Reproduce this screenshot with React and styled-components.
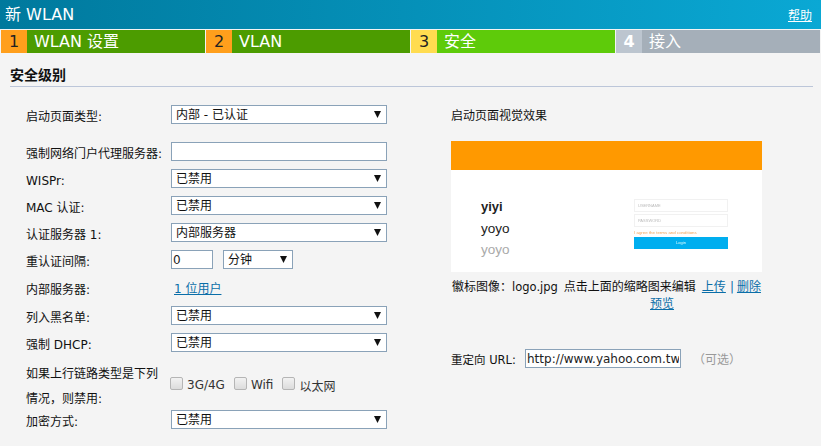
import React from "react";
import styled, { createGlobalStyle } from "styled-components";

const FONT = `"DejaVu Sans", "Noto Sans CJK SC", sans-serif`;

const Global = createGlobalStyle`
  html, body { margin: 0; padding: 0; background: #f4f4f4; overflow: hidden; }
  body { font-family: ${FONT}; font-size: 12px; color: #111; }
`;
const Page = styled.div`width: 821px; height: 446px; overflow: hidden; background: #f4f4f4;`;
const Header = styled.header`
  height: 29px; display: flex; align-items: center; justify-content: space-between;
  padding: 0 9px 0 5px; color: #fff;
  background: linear-gradient(90deg, #00799d 0%, #0aa8d4 100%);
`;
const HeaderTitle = styled.div`font-size: 16px; line-height: 29px;`;
const HelpLink = styled.a`font-size: 12px; color: #fff; text-decoration: underline;`;
const Steps = styled.div`
  display: grid; grid-template-columns: repeat(4, 204px); column-gap: 1px;
  padding: 1px 0 0 1px; height: 23px;
`;
const Step = styled.div`display: flex; height: 23px; background: ${p => p.$bg};`;
const StepNum = styled.div`
  width: 26px; background: ${p => p.$bg}; color: ${p => p.$color || "#222"};
  font-size: 16px; line-height: 23px; text-align: center;
  font-weight: ${p => p.$bold ? 700 : 400};
`;
const StepLabel = styled.div`
  color: #fff; font-size: 16px; line-height: 23px; padding-left: 7px;
`;
const SectionTitle = styled.h2`
  margin: 13px 8px 0 10px; height: 20px; font-size: 14px; line-height: 18px; font-weight: 700;
  color: #111; border-bottom: 1px solid #bcc6d9;
`;
const Columns = styled.div`display: flex; padding-top: 18px;`;
const LeftCol = styled.div`width: 387px; padding-left: 26px; box-sizing: border-box; flex: none;`;
const Row = styled.div`
  display: grid; grid-template-columns: 145px 216px; align-items: center;
  min-height: 19px; margin-top: ${p => p.$mt ?? 8}px;
`;
const Label = styled.div`font-size: 12px; line-height: 14px; color: #111; padding-top: 5px; white-space: nowrap;`;
const Select = styled.div`
  box-sizing: border-box; width: ${p => p.$w || 216}px; height: 19px;
  border: 1px solid #8aa2b8; background: #fff; display: flex; align-items: center;
  justify-content: space-between; padding: 0 4px; font-size: 12px; line-height: 15px; color: #111;
`;
const SelectText = styled.span`padding-top: 1px;`;
const Arrow = styled.svg`width: 7px; height: 7px; flex: none; margin-right: 1px;`;
const TextInput = styled.input`
  box-sizing: border-box; width: ${p => p.$w || 216}px; height: 19px; margin: 0; padding: 0 1px;
  border: 1px solid #8aa2b8; background: #fff; outline: none; border-radius: 0; flex: none;
  font-family: ${FONT}; font-size: 12px; color: #222;
`;
const Inline = styled.div`display: flex; align-items: center; gap: 10px;`;
const CheckRow = styled.div`display: flex; align-items: center; gap: 9px; margin-left: -1px;`;
const UserLink = styled.a`color: #0a6ea8; text-decoration: underline; font-size: 12px; padding-left: 3px;`;
const Check = styled.label`display: inline-flex; align-items: center; gap: 4px; font-size: 12px; color: #333;`;
const Box = styled.span`
  display: block; width: 11px; height: 11px; border: 1px solid #b5b5b5; border-radius: 2px;
  background: linear-gradient(#f2f2f2, #dcdcdc); margin-top: -4px;
`;
const RightCol = styled.div`margin-left: 64px; width: 330px; font-size: 12px;`;
const PreviewTitle = styled.div`line-height: 20px; margin-top: 1px;`;
const Preview = styled.div`
  width: 311px; height: 131px; margin-top: 15px; background: #fff; display: flex; flex-direction: column;
`;
const PreviewBar = styled.div`height: 29px; background: #ff9900; flex: none;`;
const PreviewBody = styled.div`flex: 1; display: flex; justify-content: space-between; padding: 29px 34px 0 30px;`;
const Names = styled.div`display: flex; flex-direction: column; margin-top: -3px; font-family: "Liberation Sans", sans-serif;`;
const Name = styled.div`
  color: ${p => p.$grey ? "#aaa" : "#222"}; font-weight: ${p => p.$bold ? 700 : 400};
  line-height: 21.5px; font-size: ${p => p.$size || 13.5}px;
`;
const Login = styled.div`width: 94px; display: flex; flex-direction: column; filter: blur(0.35px); font-family: "Liberation Sans", sans-serif;`;
const Fake = styled.div`
  box-sizing: border-box; height: 13px; border: 1px solid #f1f1f1; margin-bottom: 2px;
  font-size: 4px; line-height: 11px; color: #bbb; padding-left: 3px;
`;
const Agree = styled.div`font-size: 4.4px; line-height: 8px; color: #f3a35a; white-space: nowrap;`;
const LoginBtn = styled.div`height: 12px; background: #00aeef; color: #dff; font-size: 4px; line-height: 12px; text-align: center;`;
const LogoLine = styled.div`display: flex; align-items: baseline; white-space: nowrap; margin-top: 7px; line-height: 17px; padding-left: 1px;`;
const LogoName = styled.span`margin-right: 6px; font-size: 11.5px;`;
const Upload = styled.a`color: #0a6ea8; text-decoration: underline; margin-left: 6px;`;
const Pipe = styled.span`color: #0a6ea8; margin: 0 3px 0 4px;`;
const PreviewLinkRow = styled.div`padding-left: 199px; line-height: 17px;`;
const BlueLink = styled.a`color: #0a6ea8; text-decoration: underline;`;
const UrlRow = styled.div`display: flex; align-items: center; margin-top: 36px;`;
const UrlLabel = styled.span`width: 74px; flex: none; white-space: nowrap; font-size: 11.5px;`;
const Optional = styled.span`color: #999; margin-left: 12px;`;
const TwoLine = styled.div`font-size: 12px; line-height: 25px; color: #111; white-space: nowrap; padding-top: 2px; margin-bottom: -2px;`;

const Caret = () => (
  <Arrow viewBox="0 0 7 7"><path d="M0 0h7L3.5 7z" fill="#111" /></Arrow>
);
const Drop = ({ children, w }) => <Select $w={w}><SelectText>{children}</SelectText><Caret /></Select>;

export default function App() {
  return (
    <Page>
      <Global />
      <Header>
        <HeaderTitle>新 WLAN</HeaderTitle>
        <HelpLink href="#">帮助</HelpLink>
      </Header>
      <Steps>
        <Step $bg="#4c9c00"><StepNum $bg="#ff9f1c">1</StepNum><StepLabel>WLAN 设置</StepLabel></Step>
        <Step $bg="#4c9c00"><StepNum $bg="#ff9f1c">2</StepNum><StepLabel>VLAN</StepLabel></Step>
        <Step $bg="#5ecb0a"><StepNum $bg="#ffdc50">3</StepNum><StepLabel>安全</StepLabel></Step>
        <Step $bg="#a5afb9"><StepNum $bg="#bcc5cf" $color="#fff" $bold>4</StepNum><StepLabel>接入</StepLabel></Step>
      </Steps>
      <SectionTitle>安全级别</SectionTitle>
      <Columns>
        <LeftCol>
          <Row $mt={0}><Label>启动页面类型:</Label><Drop>内部 - 已认证</Drop></Row>
          <Row $mt={18}><Label>强制网络门户代理服务器:</Label><TextInput /></Row>
          <Row><Label>WISPr:</Label><Drop>已禁用</Drop></Row>
          <Row><Label>MAC 认证:</Label><Drop>已禁用</Drop></Row>
          <Row><Label>认证服务器 1:</Label><Drop>内部服务器</Drop></Row>
          <Row>
            <Label>重认证间隔:</Label>
            <Inline><TextInput $w={42} defaultValue="0" /><Drop w={70}>分钟</Drop></Inline>
          </Row>
          <Row $mt={9}><Label>内部服务器:</Label><UserLink href="#">1 位用户</UserLink></Row>
          <Row $mt={9}><Label>列入黑名单:</Label><Drop>已禁用</Drop></Row>
          <Row><Label>强制 DHCP:</Label><Drop>已禁用</Drop></Row>
          <Row>
            <TwoLine>如果上行链路类型是下列<br />情况，则禁用:</TwoLine>
            <CheckRow>
              <Check><Box />3G/4G</Check>
              <Check><Box />Wifi</Check>
              <Check><Box />以太网</Check>
            </CheckRow>
          </Row>
          <Row $mt={0}><Label>加密方式:</Label><Drop>已禁用</Drop></Row>
        </LeftCol>
        <RightCol>
          <PreviewTitle>启动页面视觉效果</PreviewTitle>
          <Preview>
            <PreviewBar />
            <PreviewBody>
              <Names>
                <Name $bold $size={13}>yiyi</Name>
                <Name>yoyo</Name>
                <Name $grey>yoyo</Name>
              </Names>
              <Login>
                <Fake>USERNAME</Fake>
                <Fake>PASSWORD</Fake>
                <Agree>I agree the terms and conditions</Agree>
                <LoginBtn>Login</LoginBtn>
              </Login>
            </PreviewBody>
          </Preview>
          <LogoLine>
            徽标图像：<LogoName>logo.jpg</LogoName>点击上面的缩略图来编辑
            <Upload href="#">上传</Upload><Pipe>|</Pipe><BlueLink href="#">删除</BlueLink>
          </LogoLine>
          <PreviewLinkRow><BlueLink href="#">预览</BlueLink></PreviewLinkRow>
          <UrlRow>
            <UrlLabel>重定向 URL:</UrlLabel>
            <TextInput $w={156} defaultValue="http://www.yahoo.com.tw" />
            <Optional>（可选）</Optional>
          </UrlRow>
        </RightCol>
      </Columns>
    </Page>
  );
}
